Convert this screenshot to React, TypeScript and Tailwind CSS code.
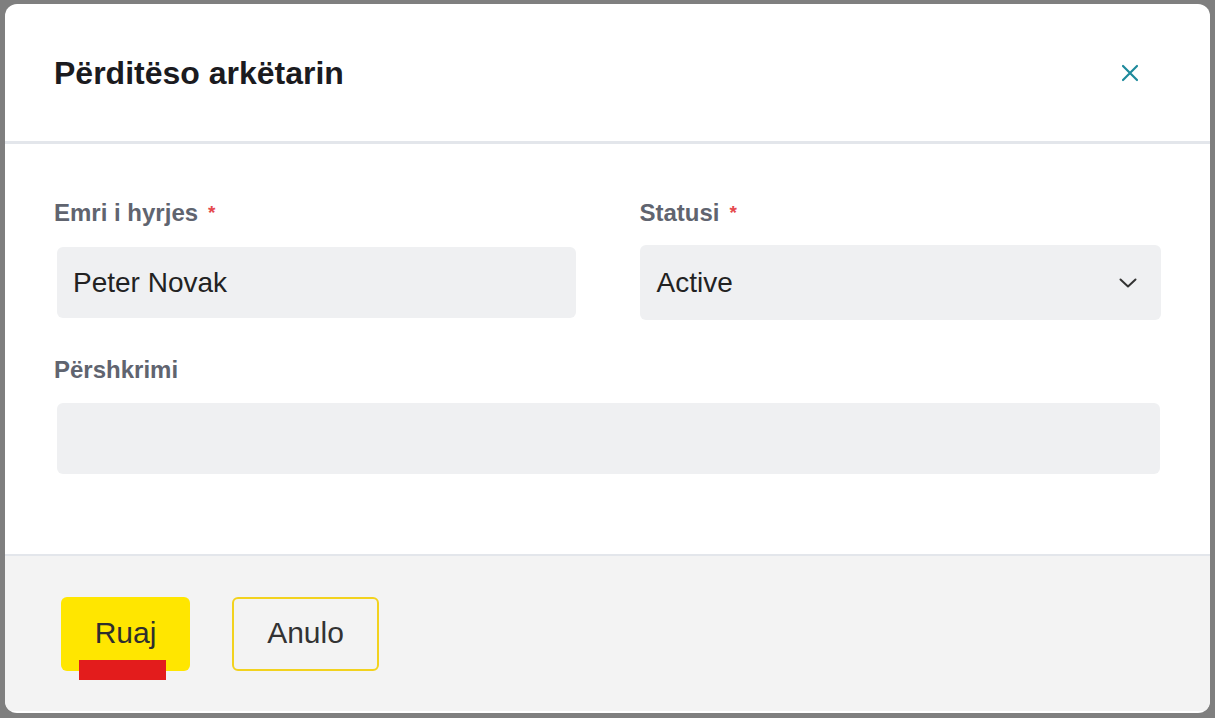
export default function App() {
  return (
    <div className="min-h-screen bg-[#7f7f7f] pt-[4px] pl-[5px] font-['Liberation_Sans',Arial,sans-serif]">
      <div className="w-[1205px] h-[709px] rounded-[12px] bg-white overflow-hidden flex flex-col pb-[2px]">
        {/* header */}
        <div className="h-[140px] shrink-0 flex items-center justify-between pl-[49px] pr-[71px] pt-[1px] border-b-[3px] border-[#e3e6eb]">
          <h1 className="text-[32px] leading-[36px] font-bold text-[#1b1b1f]">Përditëso arkëtarin</h1>
          <button className="w-[18px] h-[18px] text-[#1e8a9c]">
            <svg width="18" height="18" viewBox="0 0 18 18" fill="none" stroke="currentColor" strokeWidth="2.2" strokeLinecap="round">
              <path d="M2 2 L16 16 M16 2 L2 16" />
            </svg>
          </button>
        </div>

        {/* body */}
        <div className="flex-1 px-[49px] pt-[55px]">
          <div className="grid grid-cols-2 gap-x-[64px]">
            <div>
              <label className="block text-[24px] leading-[28px] font-bold text-[#60646f]">
                Emri i hyrjes<span className="ml-[10px] align-top text-[19px] text-[#e5484d]">*</span>
              </label>
              <div className="mt-[20px] ml-[3px] h-[71px] rounded-[6px] bg-[#eff0f2] flex items-center px-[16px] text-[28px] text-[#222]">
                Peter Novak
              </div>
            </div>
            <div>
              <label className="block text-[24px] leading-[28px] font-bold text-[#60646f]">
                Statusi<span className="ml-[10px] align-top text-[19px] text-[#e5484d]">*</span>
              </label>
              <div className="mt-[18px] h-[75px] rounded-[6px] bg-[#eff0f2] flex items-center justify-between pl-[17px] pr-[24px] text-[28px] text-[#222]">
                <span>Active</span>
                <svg width="18" height="10" viewBox="0 0 18 10" fill="none" stroke="#333" strokeWidth="2" strokeLinecap="round" strokeLinejoin="round">
                  <path d="M1.5 1.5 L9 8.5 L16.5 1.5" />
                </svg>
              </div>
            </div>
          </div>

          <label className="block mt-[36px] text-[24px] leading-[28px] font-bold text-[#60646f]">Përshkrimi</label>
          <div className="mt-[19px] ml-[3px] mr-[1px] h-[71px] rounded-[6px] bg-[#eff0f2]" />
        </div>

        {/* footer */}
        <div className="h-[157px] shrink-0 border-t-2 border-[#e3e6eb] bg-[#f3f3f3] pl-[56px] pt-[41px] flex items-start gap-[42px]">
          <button className="relative w-[129px] h-[74px] rounded-[6px] bg-[#ffe600] text-[30px] leading-[36px] pb-[2px] text-[#2e2e2e]">
            Ruaj
            <span className="absolute left-[18px] top-[63px] w-[87px] h-[20px] bg-[#e31c1c]" />
          </button>
          <button className="w-[147px] h-[74px] rounded-[6px] border-2 border-[#f2d21e] text-[30px] leading-[36px] pb-[2px] text-[#333]">
            Anulo
          </button>
        </div>
      </div>
    </div>
  );
}
